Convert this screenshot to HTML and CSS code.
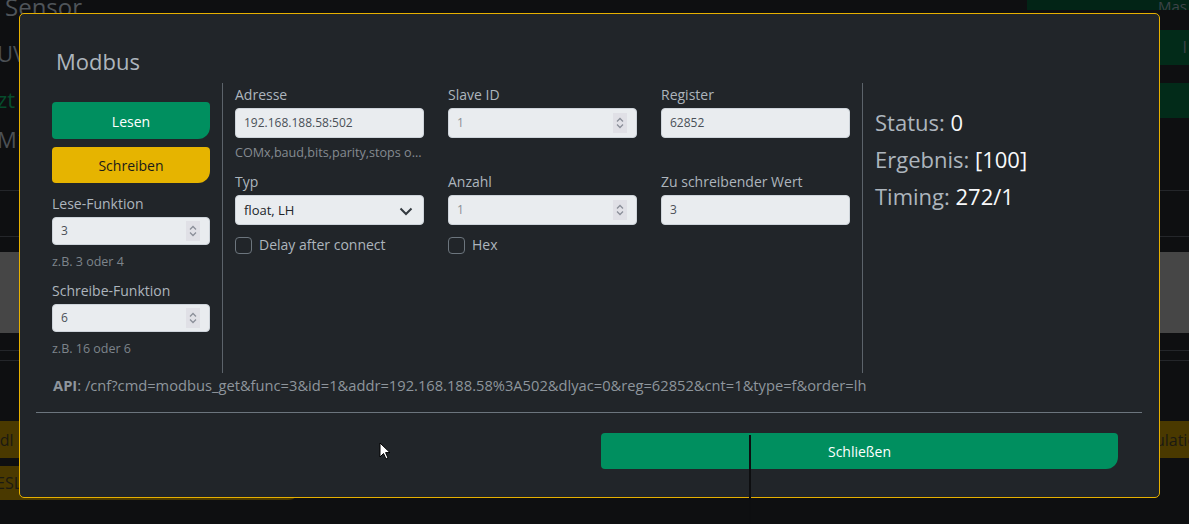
FILE: index.html
```html
<!DOCTYPE html>
<html lang="de">
<head>
<meta charset="utf-8">
<title>Modbus</title>
<link rel="stylesheet" href="styles.css">
</head>
<body>
<div class="page">
  <div class="bg-row bg-r1">
    <span class="bg-title">Sensor</span>
    <div class="bg-green-top">Mas</div>
  </div>
  <div class="bg-row bg-r2">
    <span class="bg-text">UV</span>
    <div class="bg-green-bar">I</div>
  </div>
  <div class="bg-row bg-r3">
    <span class="bg-text bg-green-text">zt</span>
    <div class="bg-green-bar"></div>
  </div>
  <div class="bg-row bg-r4">
    <span class="bg-text">M1</span>
  </div>
  <div class="bg-line bg-l1"></div>
  <div class="bg-line bg-l2"></div>
  <div class="bg-grey"></div>
  <div class="bg-line bg-l3"></div>
  <div class="bg-line bg-l4"></div>
  <div class="bg-yellow bg-y1"><span>odl</span><span>ulatio</span></div>
  <div class="bg-yellow bg-y2"><span>ESL</span></div>
</div>

<div class="modal">
  <div class="modal-header">
    <h2 class="modal-title">Modbus</h2>
  </div>
  <div class="modal-body">
    <div class="col-left">
      <button class="btn btn-green btn-lesen">Lesen</button>
      <button class="btn btn-yellow">Schreiben</button>
      <label class="lbl lbl-left">Lese-Funktion</label>
      <div class="input input-sm">3<span class="spin"><svg viewBox="0 0 10 14" width="10" height="14"><path d="M2 5.5 5 2.5 8 5.5M2 8.5 5 11.5 8 8.5" fill="none" stroke="#8b8f99" stroke-width="1.3"/></svg></span></div>
      <div class="hint">z.B. 3 oder 4</div>
      <label class="lbl lbl-left">Schreibe-Funktion</label>
      <div class="input input-sm">6<span class="spin"><svg viewBox="0 0 10 14" width="10" height="14"><path d="M2 5.5 5 2.5 8 5.5M2 8.5 5 11.5 8 8.5" fill="none" stroke="#8b8f99" stroke-width="1.3"/></svg></span></div>
      <div class="hint">z.B. 16 oder 6</div>
    </div>
    <div class="col-mid">
      <div class="field">
        <label class="lbl">Adresse</label>
        <div class="input">192.168.188.58:502</div>
        <div class="hint hint-mid">COMx,baud,bits,parity,stops o...</div>
      </div>
      <div class="field">
        <label class="lbl">Slave ID</label>
        <div class="input input-dis">1<span class="spin"><svg viewBox="0 0 10 14" width="10" height="14"><path d="M2 5.5 5 2.5 8 5.5M2 8.5 5 11.5 8 8.5" fill="none" stroke="#8b8f99" stroke-width="1.3"/></svg></span></div>
      </div>
      <div class="field">
        <label class="lbl">Register</label>
        <div class="input">62852</div>
      </div>
      <div class="field">
        <label class="lbl">Typ</label>
        <div class="input select">float, LH<svg class="chev" viewBox="0 0 14 10" width="14" height="10"><path d="M1.5 2.5 7 8 12.5 2.5" fill="none" stroke="#343a40" stroke-width="2"/></svg></div>
        <div class="check"><span class="box"></span>Delay after connect</div>
      </div>
      <div class="field">
        <label class="lbl">Anzahl</label>
        <div class="input input-dis">1<span class="spin"><svg viewBox="0 0 10 14" width="10" height="14"><path d="M2 5.5 5 2.5 8 5.5M2 8.5 5 11.5 8 8.5" fill="none" stroke="#8b8f99" stroke-width="1.3"/></svg></span></div>
        <div class="check"><span class="box"></span>Hex</div>
      </div>
      <div class="field">
        <label class="lbl">Zu schreibender Wert</label>
        <div class="input">3</div>
      </div>
    </div>
    <div class="col-res">
      <div class="res">Status: <span class="val">0</span></div>
      <div class="res">Ergebnis: <span class="val">[100]</span></div>
      <div class="res">Timing: <span class="val">272/1</span></div>
    </div>
  </div>
  <div class="api"><b>API</b>: /cnf?cmd=modbus_get&amp;func=3&amp;id=1&amp;addr=192.168.188.58%3A502&amp;dlyac=0&amp;reg=62852&amp;cnt=1&amp;type=f&amp;order=lh</div>
  <hr class="sep">
  <div class="modal-footer">
    <button class="btn btn-green btn-close">Schließen</button>
  </div>
</div>

<div class="vline"></div>
<svg class="cursor" viewBox="0 0 12 19" width="12" height="19"><path d="M1 1 V15 L4.5 11.5 L7 17 L9 16 L6.6 10.6 H11 Z" fill="#fff" stroke="#000" stroke-width="1"/></svg>
</body>
</html>
```
FILE: styles.css
```css
* { box-sizing: border-box; }
html, body { margin: 0; padding: 0; }
body {
  width: 1189px;
  height: 524px;
  overflow: hidden;
  background: #0e0f11;
  font-family: "Open Sans", "Noto Sans", "Liberation Sans", sans-serif;
  position: relative;
}

/* ---------- background page (dimmed) ---------- */
.page { width: 1189px; height: 524px; }
.bg-row { display: flex; justify-content: space-between; align-items: flex-start; overflow: hidden; }
.bg-r1 { height: 30px; }
.bg-r2 { height: 53px; }
.bg-r3 { height: 45px; }
.bg-r4 { height: 62px; }
.bg-title { font-size: 24px; color: #4f5459; margin-left: 5px; margin-top: -9px; line-height: 32px; }
.bg-text { font-size: 22px; color: #4b5055; line-height: 26px; margin-left: -3px; }
.bg-r2 .bg-text { margin-top: 10px; }
.bg-r3 .bg-text { margin-top: 3px; }
.bg-r4 .bg-text { margin-top: -2px; }
.bg-green-text { color: #064c2c; }
.bg-green-top {
  width: 162px; height: 10px; background: #022416; color: #3d4348;
  font-size: 15px; line-height: 12px; text-align: right; overflow: hidden;
  padding-right: 2px;
}
.bg-green-bar {
  width: 30px; height: 35px; background: #022b19; color: #3d4348;
  font-size: 16px; line-height: 35px; text-align: right; padding-right: 2px;
}
.bg-line { height: 1px; background: #24262a; }
.bg-l2 { margin-top: 45px; }
.bg-grey { height: 81px; background: #464646; margin-top: 15px; }
.bg-l3 { margin-top: 17px; }
.bg-l4 { margin-top: 9px; }
.bg-yellow {
  display: flex; justify-content: space-between; align-items: center;
  background: #4a3900; color: #1b1a12; font-size: 16px; overflow: hidden;
}
.bg-y1 { height: 37px; margin-top: 60px; }
.bg-y1 span:first-child { margin-left: -10px; }
.bg-y1 span:last-child { margin-right: -8px; }
.bg-y2 { height: 34px; margin-top: 8px; width: 300px; border-bottom-right-radius: 12px; }
.bg-y2 span { margin-left: -4px; }

/* ---------- modal ---------- */
.modal {
  position: absolute;
  left: 19px; top: 13px;
  width: 1141px; height: 485px;
  background: #212529;
  border: 1px solid #e6b000;
  border-radius: 5px;
  color: #adb5bd;
}
.modal-header { padding: 33px 0 0 36px; height: 69px; }
.modal-title { margin: 0; font-size: 22px; font-weight: 400; line-height: 28px; color: #adb5bd; }

.modal-body { display: flex; padding: 0 0 0 32px; height: 290px; }
.col-left { width: 158px; margin-right: 12px; padding-top: 19px; display: flex; flex-direction: column; }
.col-mid {
  border-left: 1px solid #5c636a; border-right: 1px solid #5c636a;
  padding: 2px 12px 0 12px;
  display: grid; grid-template-columns: 189px 189px 189px; column-gap: 24px;
  grid-template-rows: 87px auto;
  align-content: start;
  height: 290px;
}
.col-res { padding: 21px 0 0 12px; }

.btn {
  display: block; width: 100%; border: 0; font-family: inherit; font-size: 14px;
  border-radius: 4px 4px 12px 4px; cursor: pointer; padding: 0;
}
.btn-green { background: #008f5f; color: #fff; }
.btn-yellow { background: #e6b400; color: #1a1a1a; height: 36px; margin-top: 8px; }
.btn-lesen { height: 37px; padding-top: 1px; }

.lbl { display: block; font-size: 14px; line-height: 20px; color: #adb5bd; margin-bottom: 3px; }
.lbl-left { margin-top: 11px; margin-bottom: 3px; }

.input {
  position: relative;
  height: 30px; background: #e9ecef; border: 1px solid #ced4da; border-radius: 4px;
  color: #495057; font-size: 12px; line-height: 28px; padding-left: 8px;
}
.input-dis { color: #8a8f96; }
.input-sm { height: 28px; line-height: 26px; }
.spin {
  position: absolute; right: 9px; top: 50%; transform: translateY(-50%);
  width: 14px; height: 20px; background: #e0e0e6; display: flex; align-items: center; justify-content: center;
}
.select { color: #212529; font-size: 13px; }
.chev { position: absolute; right: 10px; top: 10px; }

.hint { font-size: 12.5px; line-height: 16px; color: #7d848b; margin-top: 9px; }
.hint-mid { margin-top: 7px; color: #858b91; font-size: 12.6px; }

.check { display: flex; align-items: center; font-size: 14px; color: #adb5bd; margin-top: 11px; line-height: 18px; }
.box { width: 17px; height: 17px; border: 1px solid #6c757d; border-radius: 4px; margin-right: 7px; }

.res { font-size: 22px; line-height: 37px; color: #adb5bd; }
.val { color: #f8f9fa; }

.api { padding: 2px 0 0 33px; font-size: 14.7px; line-height: 20px; color: #8e959c; }
.api b { font-weight: 700; }
.sep { margin: 17px 17px 0 16px; border: 0; border-top: 1px solid #6c757d; height: 0; }
.modal-footer { padding: 20px 41px 0 581px; }
.btn-close { height: 36px; }

.vline { position: absolute; left: 749px; top: 435px; width: 2px; height: 89px; background: #0d0e10; }
.cursor { position: absolute; left: 379px; top: 442px; }
```
